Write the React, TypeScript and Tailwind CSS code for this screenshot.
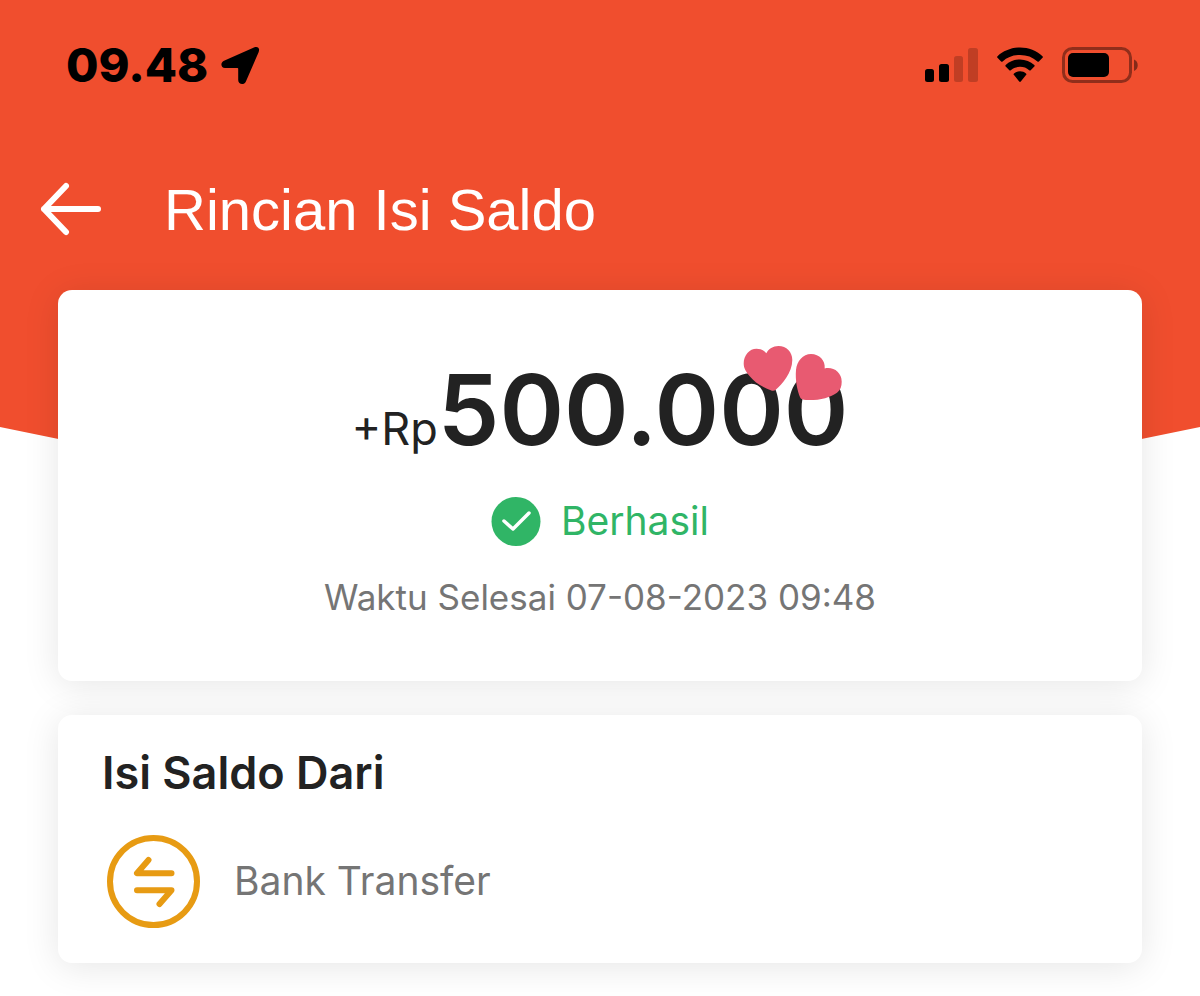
import type { ReactNode } from "react";

function StatusBar() {
  return (
    <div className="flex h-[130px] items-center justify-between pr-15 pl-[66px] text-black">
      <div className="flex items-center gap-3">
        <span className="text-[47px] leading-15 font-extrabold">09.48</span>
        <svg className="h-10 w-10" viewBox="0 0 40 40" fill="currentColor" aria-hidden="true">
          <path d="M34.5 2.200 4 15.800C0 17.600.8 23 5 23h12.500q.7 0 .7.7V35c0 4.600 5.800 5.600 7.700 1.500L38.600 7.200C40.200 3.400 38 1 34.500 2.200Z" />
        </svg>
      </div>

      <div className="flex items-center gap-4">
        {/* Signal */}
        <svg className="h-9 w-14" viewBox="0 0 56 36" fill="currentColor" aria-hidden="true">
          <rect x="1" y="22" width="9" height="13" rx="2.500" />
          <rect x="15" y="17" width="10" height="18" rx="2.500" />
          <rect x="30" y="9" width="9" height="26" rx="2.500" opacity="0.2" />
          <rect x="44" y="1" width="10" height="34" rx="2.500" opacity="0.2" />
        </svg>

        {/* Wifi */}
        <svg className="h-9 w-12" viewBox="0 0 48 36" fill="currentColor" aria-hidden="true">
          <path d="M24 .5C15.300.5 7.400 3.800 1.500 9.200q-.8.800 0 1.600l3.600 3.600q.7.700 1.500 0C11.300 10.200 17.100 8 24 8s12.700 2.200 17.400 6.400q.8.700 1.500 0l3.600-3.600q.8-.8 0-1.600C40.600 3.800 32.700.5 24 .5Z" />
          <path d="M24 12.500c-5.500 0-10.500 2.100-14.300 5.500q-.8.800 0 1.600l3.600 3.600q.7.700 1.500 0c2.600-2.300 5.500-3.400 9.200-3.400s6.600 1.100 9.200 3.400q.8.700 1.500 0l3.600-3.600q.8-.8 0-1.600C34.500 14.600 29.500 12.500 24 12.500Z" />
          <path d="M24 24.300c-2.300 0-4.400.8-6 2.200q-.9.800 0 1.600l5.200 6.400q.8.800 1.600 0l5.200-6.400q.9-.8 0-1.600c-1.600-1.400-3.700-2.200-6-2.200Z" />
        </svg>

        {/* Battery */}
        <svg className="h-9 w-20" viewBox="0 0 80 36" fill="currentColor" aria-hidden="true">
          <rect x="3.500" y="1.500" width="67" height="33" rx="9" fill="none" stroke="currentColor" strokeWidth="3" opacity="0.4" />
          <rect x="8" y="6" width="41" height="24" rx="5" />
          <path d="M74 12.500c5 2 5 9.500 0 11.500Z" opacity="0.45" />
        </svg>
      </div>
    </div>
  );
}

function Card({ children, className }: { children: ReactNode; className: string }) {
  return (
    <section className={`rounded-[14px] bg-white shadow-[0_4px_36px_rgba(0,0,0,0.1)] ${className}`}>
      {children}
    </section>
  );
}

function Hearts() {
  return (
    <svg
      className="absolute -top-2 right-1 h-16 w-26"
      viewBox="0 0 104 64"
      fill="#e85a71"
      aria-hidden="true"
    >
      <path d="M32 52.700C24 50 15 45 9.500 38 5.500 33 3.700 30 3.700 25.500 3.700 17 9.500 10.700 16.500 10.700c4 0 7.500 1.600 9.800 4.600C28.500 11 33 8 38.500 8c8 0 13.800 6 13.800 14 0 13-10.300 24-16.300 29.500q-2 1.800-4 1.200Z" />
      <path d="M60.300 59.700C57.500 54 55 42 56 32c.8-9 7-16 15-16 8.500 0 14.500 6.500 13.700 14.500C93 28.500 101.700 34 101.700 43.700c0 4.500-1.200 8.300-4.700 11-6.500 5-19 8-31 7.300q-4.500-.2-5.700-2.300Z" />
    </svg>
  );
}

export default function App() {
  return (
    <div className="relative min-h-screen overflow-hidden bg-white font-['Inter',sans-serif]">
      {/* Orange backdrop with the pointed lower edge */}
      <div className="absolute inset-x-0 top-0 h-[550px] bg-[#f04e2e] [clip-path:polygon(0_0,100%_0,100%_427px,50%_100%,0_427px)]" />

      <div className="relative">
        <StatusBar />

        <header className="flex h-40 items-center gap-15 px-10 text-white">
          <button type="button" aria-label="Kembali">
            <svg
              className="h-14 w-16"
              viewBox="0 0 64 56"
              fill="none"
              stroke="currentColor"
              strokeWidth="6"
              strokeLinecap="round"
              strokeLinejoin="round"
              aria-hidden="true"
            >
              <path d="M26 4 4 27l22 23M4 27h54" />
            </svg>
          </button>
          <h1 className="font-['Liberation_Sans',sans-serif] text-[58px] leading-16">
            Rincian Isi Saldo
          </h1>
        </header>

        <main className="flex flex-col gap-[34px] px-[58px]">
          <Card className="flex flex-col items-center pt-14 pb-15">
            <p className="relative flex items-baseline leading-32 text-[#222]">
              <span className="text-[45px]">+Rp</span>
              <span className="text-[98px] font-semibold">500.000</span>
              <Hearts />
            </p>

            <div className="flex items-center gap-5 text-[#30b566]">
              <svg className="h-[50px] w-[50px]" viewBox="0 0 50 50" aria-hidden="true">
                <circle cx="25" cy="25.500" r="24.500" fill="currentColor" />
                <path
                  d="m13 25 9 8 16-16"
                  fill="none"
                  stroke="#fff"
                  strokeWidth="3.500"
                  strokeLinecap="round"
                  strokeLinejoin="round"
                />
              </svg>
              <span className="text-[39px] leading-14">Berhasil</span>
            </div>

            <p className="mt-6 text-[35px] leading-12 text-[#757575]">
              Waktu Selesai 07-08-2023 09:48
            </p>
          </Card>

          <Card className="px-11 pt-7 pb-8">
            <h2 className="text-[45px] leading-15 font-semibold text-[#222]">Isi Saldo Dari</h2>
            <div className="mt-7 flex items-center gap-8">
              <svg
                className="h-25 w-25"
                viewBox="0 0 100 100"
                fill="none"
                stroke="#e79b13"
                strokeWidth="6"
                strokeLinecap="round"
                strokeLinejoin="round"
                aria-hidden="true"
              >
                <circle cx="51.500" cy="50.500" r="43.500" />
                <path d="M46.500 29 35 42.300h34.500M35 59.300h34.500L57.500 73" />
              </svg>
              <span className="text-[39px] leading-14 text-[#757575]">Bank Transfer</span>
            </div>
          </Card>
        </main>
      </div>
    </div>
  );
}
